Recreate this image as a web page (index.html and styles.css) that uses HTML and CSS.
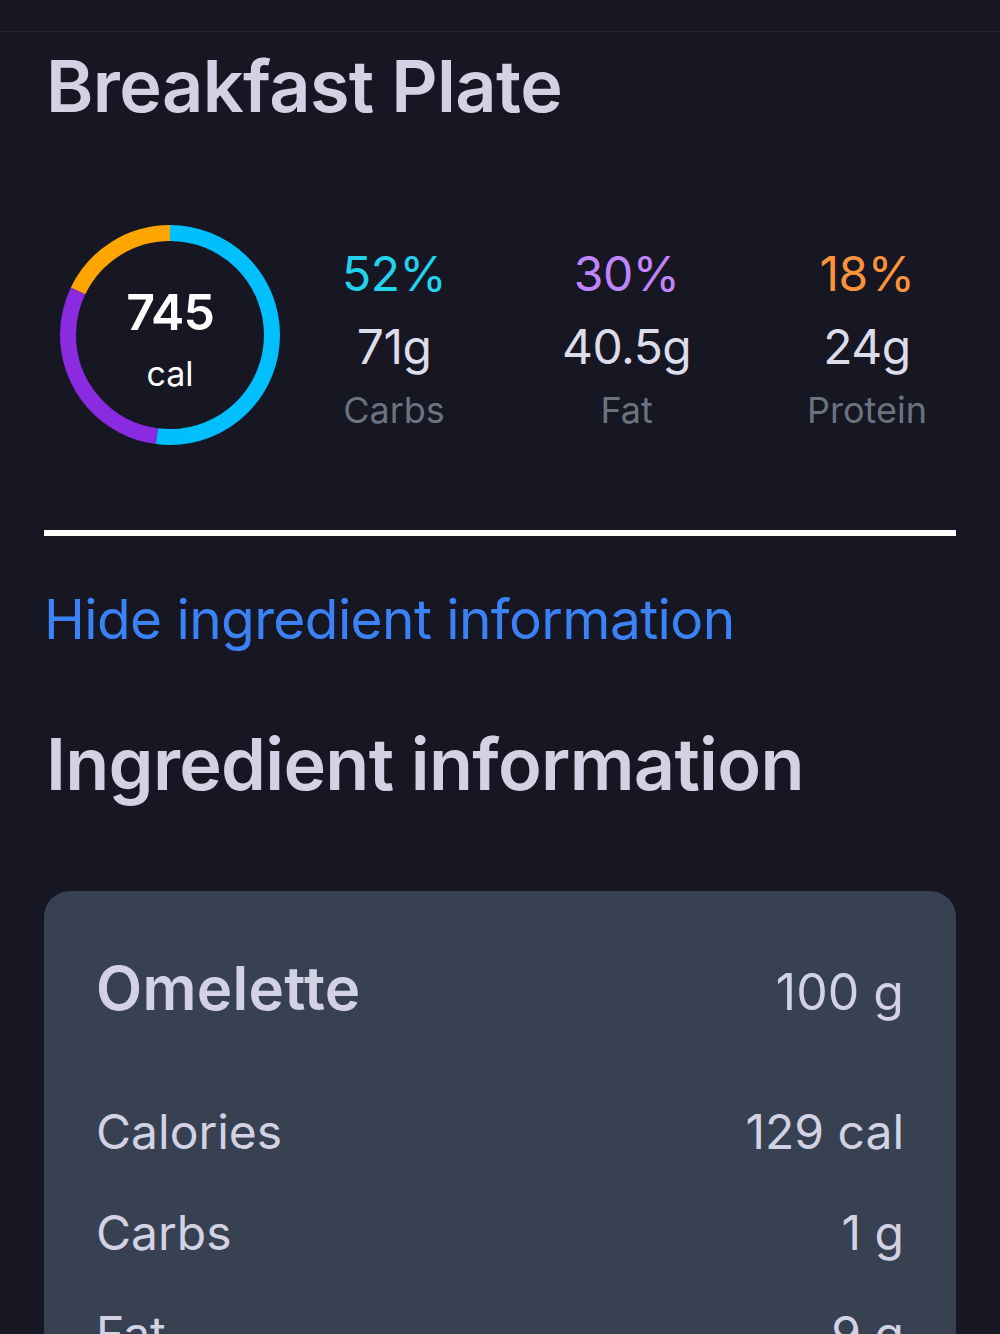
FILE: index.html
```html
<!DOCTYPE html>
<html lang="en">
<head>
<meta charset="utf-8">
<title>Breakfast Plate</title>
<link rel="stylesheet" href="styles.css">
</head>
<body>
<div class="topbar"></div>
<main class="page">
  <h1 class="title">Breakfast Plate</h1>

  <section class="summary">
    <div class="ring">
      <svg class="ring-svg" width="220" height="220" viewBox="0 0 220 220">
        <g transform="rotate(-90 110 110)" fill="none" stroke-width="16">
          <circle cx="110" cy="110" r="102" stroke="#00bfff" stroke-dasharray="333.26 640.88" stroke-dashoffset="0"/>
          <circle cx="110" cy="110" r="102" stroke="#8a2be2" stroke-dasharray="192.26 640.88" stroke-dashoffset="-333.26"/>
          <circle cx="110" cy="110" r="102" stroke="#ffa500" stroke-dasharray="115.36 640.88" stroke-dashoffset="-525.52"/>
        </g>
      </svg>
      <div class="ring-text">
        <div class="ring-num">745</div>
        <div class="ring-unit">cal</div>
      </div>
    </div>
    <div class="stats">
      <div class="stat">
        <div class="pct pct-carbs">52%</div>
        <div class="amt">71g</div>
        <div class="lbl">Carbs</div>
      </div>
      <div class="stat">
        <div class="pct pct-fat">30%</div>
        <div class="amt">40.5g</div>
        <div class="lbl">Fat</div>
      </div>
      <div class="stat">
        <div class="pct pct-protein">18%</div>
        <div class="amt">24g</div>
        <div class="lbl">Protein</div>
      </div>
    </div>
  </section>

  <hr class="divider">

  <a class="toggle" href="#">Hide ingredient information</a>

  <h2 class="section-title">Ingredient information</h2>

  <div class="card">
    <div class="card-head">
      <span class="food">Omelette</span>
      <span class="weight">100 g</span>
    </div>
    <div class="row"><span>Calories</span><span>129 cal</span></div>
    <div class="row"><span>Carbs</span><span>1 g</span></div>
    <div class="row"><span>Fat</span><span>9 g</span></div>
  </div>
</main>
</body>
</html>
```

FILE: styles.css
```css
* { box-sizing: border-box; }

html, body {
  margin: 0;
  padding: 0;
  background: #161722;
  font-family: Inter, "Noto Sans", "Liberation Sans", sans-serif;
  color: #d2d2e4;
}

.topbar {
  height: 32px;
  border-bottom: 1px solid #23272a;
}

.page {
  padding: 0 44px;
}

.title {
  margin: 11px 0 0 2px;
  font-size: 72px;
  line-height: 86px;
  font-weight: 600;
  letter-spacing: -0.6px;
  color: #d2d2e4;
}

.summary {
  display: flex;
  align-items: flex-start;
  margin-top: 96px;
  padding-left: 16px;
  padding-right: 29px;
}

.ring {
  display: grid;
  width: 220px;
  height: 220px;
  flex: none;
}

.ring-svg,
.ring-text {
  grid-area: 1 / 1;
}

.ring-text {
  display: flex;
  flex-direction: column;
  align-items: center;
  justify-content: center;
  gap: 12px;
  padding-top: 6px;
  color: #ffffff;
}

.ring-num {
  font-size: 50px;
  line-height: 60px;
  font-weight: 600;
  letter-spacing: -1px;
}

.ring-unit {
  font-size: 34px;
  line-height: 40px;
}

.stats {
  flex: 1;
  display: flex;
  justify-content: space-between;
  margin-left: 62px;
  margin-top: 19px;
}

.stat {
  display: flex;
  flex-direction: column;
  align-items: center;
}

.pct {
  font-size: 48px;
  line-height: 60px;
  letter-spacing: -0.5px;
}

.pct-carbs { color: #22d3ee; }
.pct-fat { color: #c084fc; }
.pct-protein { color: #fb923c; }

.amt {
  margin-top: 13px;
  font-size: 48px;
  line-height: 60px;
  letter-spacing: -0.5px;
  color: #dcdcea;
}

.lbl {
  margin-top: 9px;
  font-size: 36px;
  line-height: 48px;
  color: #6b7280;
}

.divider {
  margin: 85px 0 0;
  height: 6px;
  border: 0;
  background: #ffffff;
}

.toggle {
  display: block;
  margin-top: 50px;
  font-size: 55px;
  line-height: 66px;
  color: #3b82f6;
  text-decoration: none;
  letter-spacing: -0.6px;
}

.section-title {
  margin: 69px 0 0 2px;
  font-size: 72px;
  line-height: 86px;
  font-weight: 600;
  letter-spacing: -0.7px;
  color: #d2d2e4;
}

.card {
  margin-top: 84px;
  background: #374151;
  border-radius: 26px;
  padding: 62px 52px 40px;
}

.card-head {
  display: flex;
  justify-content: space-between;
  align-items: baseline;
  line-height: 70px;
  margin-bottom: 54px;
}

.food {
  font-size: 60px;
  font-weight: 600;
  letter-spacing: 0.3px;
  color: #d2d2e4;
}

.weight {
  font-size: 50px;
  color: #d2d2e4;
}

.row {
  display: flex;
  justify-content: space-between;
  height: 101px;
  line-height: 101px;
  font-size: 48px;
  color: #d2d2e4;
}
```
